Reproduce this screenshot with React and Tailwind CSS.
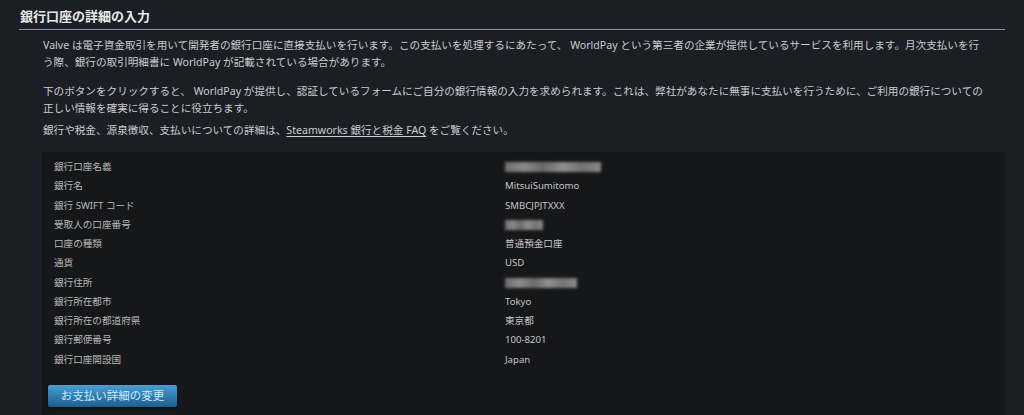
import React from "react";

const rows = [
  ["銀行口座名義", { blur: "w-[96px]" }],
  ["銀行名", "MitsuiSumitomo"],
  ["銀行 SWIFT コード", "SMBCJPJTXXX"],
  ["受取人の口座番号", { blur: "w-[38px]" }],
  ["口座の種類", "普通預金口座"],
  ["通貨", "USD"],
  ["銀行住所", { blur: "w-[72px]" }],
  ["銀行所在都市", "Tokyo"],
  ["銀行所在の都道府県", "東京都"],
  ["銀行郵便番号", "100-8201"],
  ["銀行口座開設国", "Japan"],
];

function Blur({ w }) {
  return (
    <span className={`inline-block align-middle h-[10px] ${w} blur-[1.5px] bg-[linear-gradient(90deg,#6e6e6e_0%,#8a8a8a_20%,#6a6a6a_40%,#8f8f8f_60%,#747474_80%,#888_100%)]`} />
  );
}

export default function App() {
  return (
    <div
      className="w-[1024px] h-[415px] overflow-hidden bg-[#1b1e24]"
      style={{ fontFamily: '"Noto Sans", "Noto Sans CJK JP", sans-serif' }}
    >
      <div className="px-[19px] pt-[7px]">
        <h2 className="pl-[1px] text-[13px] font-bold leading-[18px] pb-[4px] text-[#e8e8e8] border-b border-[#8d939b]">
          銀行口座の詳細の入力
        </h2>
        <div className="pl-[23px] pt-[7px] text-[10.6px] leading-[16.5px] text-[#c9cdd2]">
          <p className="pl-[1px] whitespace-nowrap">
            Valve は電子資金取引を用いて開発者の銀行口座に直接支払いを行います。この支払いを処理するにあたって、 WorldPay という第三者の企業が提供しているサービスを利用します。月次支払いを行
            <br />
            う際、銀行の取引明細書に WorldPay が記載されている場合があります。
          </p>
          <p className="pl-[1px] mt-[13px] whitespace-nowrap">
            下のボタンをクリックすると、 WorldPay が提供し、認証しているフォームにご自分の銀行情報の入力を求められます。これは、弊社があなたに無事に支払いを行うために、ご利用の銀行についての
            <br />
            正しい情報を確実に得ることに役立ちます。
          </p>
          <p className="pl-[1px] mt-[6px] whitespace-nowrap">
            銀行や税金、源泉徴収、支払いについての詳細は、
            <span className="underline underline-offset-2">Steamworks 銀行と税金 FAQ</span>
            {" "}をご覧ください。
          </p>
          <div className="mt-[13px] bg-[#161718] px-[6px] pt-[5.5px] pb-[12px] h-[270px]">
            <div className="grid grid-cols-[457px_1fr] text-[9.6px] leading-[19.25px]">
              {rows.map(([label, value]) => (
                <React.Fragment key={label}>
                  <div className="pl-[6px] text-[#b8b8b8] whitespace-nowrap">{label}</div>
                  <div className="text-[#c4c4c4] whitespace-nowrap">
                    {typeof value === "string" ? value : <Blur w={value.blur} />}
                  </div>
                </React.Fragment>
              ))}
            </div>
            <button className="mt-[16px] w-[129px] h-[22px] rounded-[2px] text-[11.5px] text-[#cfe8f7] bg-[linear-gradient(to_bottom,#4a9fd3_0%,#2f7fb3_50%,#1e5f8c_100%)] shadow-[0_1px_2px_rgba(0,0,0,0.6)]">
              お支払い詳細の変更
            </button>
          </div>
        </div>
      </div>
    </div>
  );
}
